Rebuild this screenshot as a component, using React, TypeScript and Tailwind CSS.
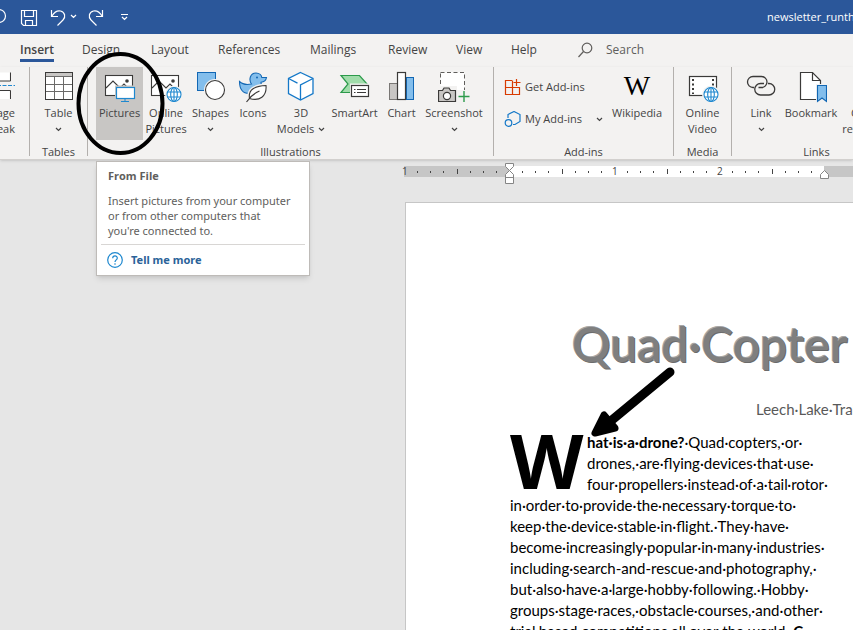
import type { ReactNode } from "react";

const ink = "#3b3a39";

function Chevron() {
  return (
    <svg width="7" height="5" viewBox="0 0 7 5" fill="none" stroke="currentColor" strokeWidth="1.2">
      <path d="M1 1l2.5 2.5L6 1" />
    </svg>
  );
}

function Globe({ x, y }: { x: number; y: number }) {
  return (
    <g transform={`translate(${x} ${y})`} stroke="#1e88cf" strokeWidth="1.1" fill="#fff">
      <circle cx="7.5" cy="7.5" r="9" stroke="none" fill="#f3f2f1" />
      <circle cx="7.5" cy="7.5" r="7" />
      <ellipse cx="7.5" cy="7.5" rx="3.3" ry="7" fill="none" />
      <path d="M1 5h13M1 10h13M7.5.5v14" fill="none" />
    </g>
  );
}

function PhotoFrame() {
  return (
    <g fill="#fff" stroke={ink} strokeWidth="1.1">
      <rect x="1.5" y="4.5" width="27" height="20" />
      <path d="M2 17l7-7 7 7 4-4 4 4" fill="none" />
      <circle cx="23" cy="10" r="1.8" fill={ink} stroke="none" />
    </g>
  );
}

function Icon({ children }: { children: ReactNode }) {
  return (
    <svg width="32" height="32" viewBox="0 0 32 32" fill="none" className="shrink-0" aria-hidden="true">
      {children}
    </svg>
  );
}

const TableIcon = () => (
  <Icon>
    <rect x="2.5" y="1.5" width="27" height="27" fill="#fff" stroke={ink} />
    <rect x="3" y="2" width="26" height="3.5" fill="#c8c6c4" />
    <path d="M3 5.5h26M3 13.5h26M3 20.5h26M11.5 6v22M20.5 6v22" stroke="#6b6a69" />
    <rect x="2.5" y="1.5" width="27" height="27" stroke={ink} />
  </Icon>
);
const PicturesIcon = () => (
  <Icon>
    <PhotoFrame />
    <rect x="11" y="14.5" width="21" height="17" fill="#c8c6c4" />
    <path d="M17 30.5h8M21 28v3" stroke="#1e88cf" />
    <rect x="12.5" y="16.5" width="18" height="11" fill="#fff" stroke="#1e88cf" strokeWidth="1.2" />
  </Icon>
);
const OnlinePicturesIcon = () => (
  <Icon>
    <PhotoFrame />
    <Globe x={16.5} y={16} />
  </Icon>
);
const ShapesIcon = () => (
  <Icon>
    <rect x="2.5" y="1.5" width="18" height="18" fill="#83beec" stroke="#1267b4" />
    <circle cx="20" cy="19" r="11" fill="#f3f2f1" />
    <circle cx="20" cy="19" r="9.5" fill="#fff" stroke={ink} strokeWidth="1.1" />
  </Icon>
);
const DuckIcon = () => (
  <Icon>
    <path
      d="M2.500 10.500c3 3 7 3.500 12 2.500-3-4-1.500-11 4.500-11 3.500 0 5.500 2.500 5.800 4.500h4.700c-.5 3-2.500 4.500-5.500 4.700-.5 2 2 3 2 6.300 0 4-4 5-9 5h-5c-6 0-9.500-4-9.500-12z"
      fill="#83beec"
      stroke="#1267b4"
      strokeWidth="1.100"
    />
    <circle cx="20" cy="6.500" r="1" fill="#1267b4" />
    <path d="M29 14.500c-11 .5-18 4-16.500 13 10 3 17.500-2 16.500-13z" fill="#f3f2f1" stroke="#f3f2f1" strokeWidth="4" />
    <path d="M29 14.500c-11 .5-18 4-16.500 13 10 3 17.500-2 16.500-13z" fill="#fff" stroke={ink} strokeWidth="1.100" />
    <path d="M9.500 31c3-4.500 7-8.500 13-11" stroke={ink} strokeWidth="1.100" />
  </Icon>
);
const CubeIcon = () => (
  <Icon>
    <path d="M15.500 1.500l12.500 6v15l-12.500 6.500-12-6.500v-15z" fill="#fff" stroke="#1478c8" strokeWidth="1.300" />
    <path d="M28 7.500l-12.500 6.500v15M3.500 7.500l9 4.700" stroke="#1478c8" strokeWidth="1.300" />
  </Icon>
);
const SmartArtIcon = () => (
  <Icon>
    <path d="M2 4.500h18.500l8 9v8h-26.500l7-8.500z" fill="#a0dcaa" stroke="#2c9a4b" strokeWidth="1.200" />
    <path d="M11 12.500h21V28H11z" fill="#f3f2f1" />
    <rect x="12.500" y="14.500" width="17" height="11" fill="#fff" stroke={ink} strokeWidth="1.200" />
    <path d="M15 18.500h1.500M18 18.500h9M15 21.500h1.500M18 21.500h9" stroke={ink} />
  </Icon>
);
const ChartIcon = () => (
  <Icon>
    <rect x="3.500" y="12.500" width="8" height="16" fill="#c8c6c4" stroke="#797775" />
    <rect x="20.500" y="6.500" width="7" height="22" fill="#83beec" stroke="#1267b4" />
    <rect x="11.500" y="1.500" width="8" height="27" fill="#fff" stroke={ink} strokeWidth="1.200" />
  </Icon>
);
const ScreenshotIcon = () => (
  <Icon>
    <rect x="2.500" y="1.500" width="24" height="24" fill="#fff" stroke="#605e5c" strokeDasharray="4 2.500" />
    <path d="M0 15h19v17H0zM19 19h13v13H19z" fill="#f3f2f1" />
    <path d="M.5 19.500h4l1.500-2.500h5l1.500 2.500h5v11H.5z" fill="#c8c6c4" stroke={ink} strokeWidth="1.200" />
    <circle cx="9" cy="25" r="3.600" fill="#fff" stroke={ink} strokeWidth="1.200" />
    <path d="M20.500 25.500h11M26 20v11" stroke="#2c9a4b" strokeWidth="1.400" />
  </Icon>
);
const VideoIcon = () => (
  <Icon>
    <rect x="2.500" y="5.500" width="27" height="19" fill="#fff" stroke={ink} strokeWidth="1.200" />
    <path d="M6 8v15M26 8v8" stroke={ink} strokeWidth="2" strokeDasharray="2 2.500" />
    <Globe x={16.500} y={16} />
  </Icon>
);
const LinkIcon = () => (
  <Icon>
    <path
      d="M9 16.500H8a5.500 5.500 0 0 1 0-11h8.500a5.500 5.500 0 0 1 0 11h-3M19 12.500h-3.500a5.500 5.500 0 0 0 0 11.500H24a5.500 5.500 0 0 0 0-11.500h-1"
      stroke={ink}
      strokeWidth="1.300"
    />
  </Icon>
);
const BookmarkIcon = () => (
  <Icon>
    <path d="M5.500 1.500h12l8 8v19h-20z" fill="#fff" stroke={ink} strokeWidth="1.200" />
    <path d="M17.500 1.500v8h8" stroke={ink} strokeWidth="1.200" />
    <path d="M21 13h12v19H21z" fill="#f3f2f1" />
    <path d="M22.500 14.500h9v16l-4.500-3.500-4.500 3.500z" fill="#83beec" stroke="#1267b4" strokeWidth="1.100" />
  </Icon>
);

type ToolProps = {
  icon: ReactNode;
  label: string;
  second?: string;
  arrow?: boolean;
  width: string;
  active?: boolean;
};

function Tool({ icon, label, second, arrow, width, active }: ToolProps) {
  return (
    <button
      type="button"
      className={`flex h-[73px] shrink-0 flex-col items-center whitespace-nowrap pt-1 ${width} ${active ? "bg-[#c8c6c4]" : ""}`}
    >
      {icon}
      <span className="mt-0.5 leading-4">{label}</span>
      <span className="flex h-4 items-center gap-1 leading-4">
        {second}
        {arrow && <Chevron />}
      </span>
    </button>
  );
}

function Group({ name, width, children }: { name: string; width: string; children: ReactNode }) {
  return (
    <section aria-label={name} className={`flex h-[89px] shrink-0 flex-col border-r border-[#b3b0ad] ${width}`}>
      <div className="flex h-[79px] shrink-0">{children}</div>
      <div className="text-center leading-3">{name}</div>
    </section>
  );
}

const tabs = [
  { name: "Insert", width: "w-[62px]" },
  { name: "Design", width: "w-[69px]" },
  { name: "Layout", width: "w-[67px]" },
  { name: "References", width: "w-[92px]" },
  { name: "Mailings", width: "w-[78px]" },
  { name: "Review", width: "w-[68px]" },
  { name: "View", width: "w-[55px]" },
  { name: "Help", width: "w-[66px]" },
];

function Inch({ label, shade }: { label?: string; shade: string }) {
  return (
    <div className={`grid h-[11px] w-[105px] shrink-0 grid-cols-8 items-center ${shade}`}>
      {[0, 1, 2, 3, 4, 5, 6, 7].map((n) =>
        n === 0 ? (
          <span key={n} className="-ml-0.5 text-[10px] leading-[11px]">{label}</span>
        ) : (
          <span key={n} className={`w-px bg-[#444] ${n === 4 ? "h-[5px]" : "h-0.5"}`} />
        ),
      )}
    </div>
  );
}

const narrowLines = ["drones,·are·flying·devices·that·use·", "four·propellers·instead·of·a·tail·rotor·"];
const wideLines = [
  "in·order·to·provide·the·necessary·torque·to·",
  "keep·the·device·stable·in·flight.·They·have·",
  "become·increasingly·popular·in·many·industries·",
  "including·search-and-rescue·and·photography,·",
  "but·also·have·a·large·hobby·following.·Hobby·",
  "groups·stage·races,·obstacle·courses,·and·other·",
];

export default function App() {
  return (
    <div className="relative flex h-screen flex-col overflow-hidden bg-[#e6e6e6] font-['Open_Sans','Noto_Sans',sans-serif] text-[11px] text-[#444]">
      <header className="flex h-[34px] shrink-0 items-center bg-[#2b579a] text-white">
        <svg width="132" height="34" viewBox="0 0 132 34" fill="none" stroke="#fff" strokeWidth="1.200" aria-label="Quick access">
          <circle cx="-1" cy="16" r="6.500" />
          <path d="M21.500 10.500h15v15h-13l-2-2zM24.500 10.500v6h9v-6M25.500 25.500v-5h7v5" />
          <path d="M51.500 10v6.500h6.500M52 16c3-5 6-5.500 8.500-5 4.500 1 5.500 6 2.500 9l-5.500 5.500M71 15l2.500 2.500L76 15" />
          <path d="M102.500 10v6.500H96M102 16c-3-5-6-5.500-8.500-5-4.500 1-5.500 6-2.500 9l5.500 5.500M121 14.500h7M122 17l2.500 2.500L127 17" />
        </svg>
        <span className="ml-auto w-[86px] overflow-hidden whitespace-nowrap">newsletter_runthrough</span>
      </header>

      <nav className="flex h-[33px] shrink-0 items-start bg-[#f3f2f1] pl-5 pt-[7px] text-[12px]">
        {tabs.map((tab, i) => (
          <button key={tab.name} type="button" className={`flex shrink-0 flex-col items-start ${tab.width}`}>
            <span className={`h-[21px] leading-[18px] ${i === 0 ? "border-b-3 border-[#2b579a] font-semibold" : ""}`}>
              {tab.name}
            </span>
          </button>
        ))}
        <label className="flex h-[18px] items-center gap-3">
          <svg width="17" height="17" viewBox="0 0 17 17" fill="none" stroke="#605e5c" strokeWidth="1.200" aria-hidden="true">
            <circle cx="10" cy="6" r="4.800" />
            <path d="M6.500 9.500L1.500 15" />
          </svg>
          <input type="search" aria-label="Search" placeholder="Search" className="h-[18px] w-20 outline-none placeholder:text-[#605e5c]" />
        </label>
      </nav>

      <div className="flex h-[93px] shrink-0 overflow-hidden border-b border-[#d2d0ce] bg-[#f3f2f1] shadow-sm">
        <section className="flex h-[89px] w-[30px] shrink-0 border-r border-[#b3b0ad]">
          <button type="button" className="flex h-[73px] w-[15px] flex-col items-end pt-1">
            <Icon>
              <path d="M14 1.500h12.500V10H14zM14 19.500h12.500V28H14z" fill="#fff" />
              <path d="M14 10h13.500V1.500M14 19.500h13.500V28" stroke={ink} />
              <path d="M14 14.500h18" stroke="#1e88cf" strokeDasharray="4 1.500" />
            </Icon>
            <span className="mt-0.5 leading-4">Page</span>
            <span className="leading-4">Break</span>
          </button>
        </section>
        <Group name="Tables" width="w-[58px]">
          <Tool icon={<TableIcon />} label="Table" arrow width="w-[57px]" />
        </Group>
        <Group name="Illustrations" width="w-[406px]">
          <div className="flex pl-2">
            <Tool icon={<PicturesIcon />} label="Pictures" width="w-[47px]" active />
            <Tool icon={<OnlinePicturesIcon />} label="Online" second="Pictures" width="w-[46px]" />
            <Tool icon={<ShapesIcon />} label="Shapes" arrow width="w-[43px]" />
            <Tool icon={<DuckIcon />} label="Icons" width="w-[42px]" />
            <Tool icon={<CubeIcon />} label="3D" second="Models" arrow width="w-[54px]" />
            <Tool icon={<SmartArtIcon />} label="SmartArt" width="w-[53px]" />
            <Tool icon={<ChartIcon />} label="Chart" width="w-[41px]" />
            <Tool icon={<ScreenshotIcon />} label="Screenshot" arrow width="w-[64px]" />
          </div>
        </Group>
        <Group name="Add-ins" width="w-[180px]">
          <div className="flex w-[112px] flex-col gap-4 pl-2.5 pt-3">
            <button type="button" className="flex items-center gap-1 whitespace-nowrap leading-4">
              <svg width="17" height="16" viewBox="0 0 17 16" fill="none" stroke="#d83b01" strokeWidth="1.200" aria-hidden="true">
                <path d="M8 1.500H1.500v14h14V8.500H1.500M8.500 1.500v14M12.500 0v7M9.500 3.500h7" />
              </svg>
              Get Add-ins
            </button>
            <button type="button" className="flex items-center gap-1 whitespace-nowrap leading-4">
              <svg width="17" height="16" viewBox="0 0 17 16" fill="none" stroke="#1478c8" strokeWidth="1.200" aria-hidden="true">
                <path d="M4 7V3.500l6-3 6 3v7l-5 3H9" />
                <circle cx="4.500" cy="12" r="3.300" />
              </svg>
              My Add-ins
              <span className="ml-2.5"><Chevron /></span>
            </button>
          </div>
          <button type="button" className="flex h-[73px] w-[62px] flex-col items-center pt-1">
            <span className="h-8 font-['Liberation_Serif',serif] text-[28px] leading-[30px] text-black">W</span>
            <span className="mt-0.5 leading-4">Wikipedia</span>
          </button>
        </Group>
        <Group name="Media" width="w-[58px]">
          <Tool icon={<VideoIcon />} label="Online" second="Video" width="w-[57px]" />
        </Group>
        <Group name="Links" width="w-[170px]">
          <Tool icon={<LinkIcon />} label="Link" arrow width="w-[58px]" />
          <Tool icon={<BookmarkIcon />} label="Bookmark" width="w-[42px]" />
          <Tool icon={<Icon>{null}</Icon>} label="Cross-" second="reference" width="w-[70px]" />
        </Group>
      </div>

      <div className="relative ml-[404px] mt-1.5 flex h-[11px] shrink-0">
        <Inch label="1" shade="bg-[#c6c6c6]" />
        <Inch shade="bg-white" />
        <Inch label="1" shade="bg-white" />
        <Inch label="2" shade="bg-white" />
        <div className="h-[11px] grow bg-[#c6c6c6]" />
        <svg className="absolute -top-1 left-[100px]" width="11" height="24" viewBox="0 0 11 24" fill="#fff" stroke="#858585" aria-hidden="true">
          <path d="M1.500 1.500h8v3l-4 4-4-4zM5.500 8.500l4 4v9h-8v-9zM1.500 15.500h8" />
        </svg>
        <svg className="absolute top-1 left-[415px]" width="11" height="11" viewBox="0 0 11 11" fill="#fff" stroke="#858585" aria-hidden="true">
          <path d="M5.500.5l4 4v4h-8v-4z" />
        </svg>
      </div>

      <main className="ml-[405px] mt-[25px] grow overflow-hidden border-l border-t border-[#c6c6c6] bg-white pl-[104px] font-['Lato','Open_Sans',sans-serif] text-black">
        <h1 className="ml-[62px] mt-[111px] whitespace-nowrap text-[48px] leading-[60px] font-semibold text-[#7f7f7f] [text-shadow:-1px_-1px_0_#a6a6a6,1px_1px_0_#6b6b6b]">
          Quad·Copter
        </h1>
        <p className="ml-[246px] mt-[25px] whitespace-nowrap text-[15px] leading-5 text-[#595959]">Leech·Lake·Trails</p>
        <article className="mt-[13px] whitespace-nowrap text-[15px] leading-[21px]">
          <span className="float-left h-[63px] w-[77px] font-['Open_Sans',sans-serif] text-[76px] leading-[56px] font-bold">W</span>
          <p>
            <strong>hat·is·a·drone?</strong>·Quad·copters,·or·
          </p>
          {narrowLines.map((line) => <p key={line}>{line}</p>)}
          {wideLines.map((line) => <p key={line}>{line}</p>)}
          <p>
            trial·based·competitions·all·over·the·world.<strong>·C</strong>
          </p>
        </article>
      </main>

      <aside className="absolute left-24 top-[161px] w-[214px] border border-[#bebbb8] bg-white text-[#605e5c] shadow-md">
        <div className="px-[11px] pt-1.5">
          <h2 className="leading-4 font-bold">From File</h2>
          <p className="mt-[9px] whitespace-nowrap pb-1.5 font-['Noto_Sans',sans-serif] leading-[15px]">
            Insert pictures from your computer
            <br />
            or from other computers that
            <br />
            you're connected to.
          </p>
        </div>
        <div className="mx-1 flex h-[31px] items-center border-t border-[#d8d6d4] pl-1.5">
          <a href="#help" className="flex items-center gap-2 font-['Noto_Sans',sans-serif] font-bold text-[#2b6399]">
            <svg width="16" height="16" viewBox="0 0 16 16" fill="none" stroke="#1e88cf" strokeWidth="1.200" aria-hidden="true">
              <circle cx="8" cy="8" r="7.300" />
              <path d="M5.700 6.200c0-3 4.600-3 4.600-.2 0 1.800-2.300 2-2.300 4M8 11.300v1.400" />
            </svg>
            Tell me more
          </a>
        </div>
      </aside>

      <svg className="pointer-events-none absolute left-0 top-0" width="853" height="630" viewBox="0 0 853 630" aria-hidden="true">
        <ellipse cx="120.500" cy="103.500" rx="42" ry="49.500" fill="none" stroke="#000" strokeWidth="4" />
        <path d="M670 372L612 420" stroke="#000" strokeWidth="9" strokeLinecap="round" />
        <path d="M604 415L595 433L615 428z" fill="#000" stroke="#000" strokeWidth="7" strokeLinejoin="round" />
      </svg>
    </div>
  );
}
